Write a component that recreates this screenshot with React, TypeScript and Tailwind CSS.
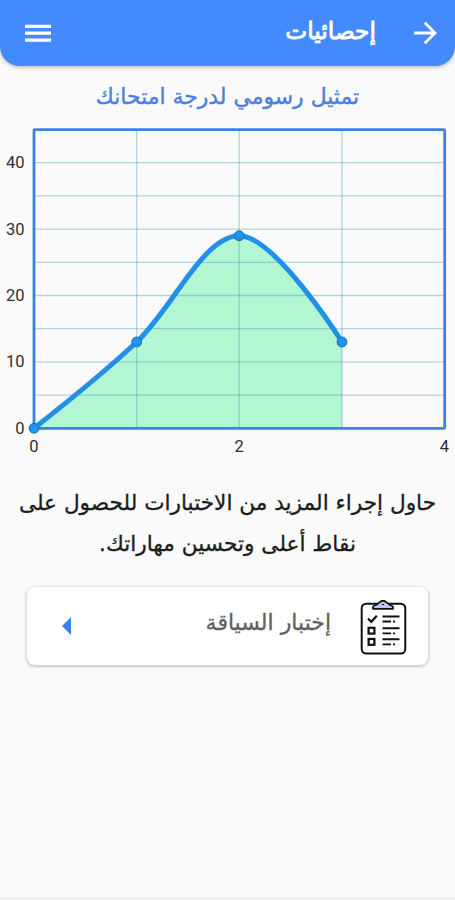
import React from "react";

const X = [34, 136.7, 239.2, 342, 444.5];
const Y0 = 428.3;
const STEP = 33.2;
const TOP = 110;
const yAt = (value: number) => Y0 - (value * STEP) / 5;

const points = [
  { x: X[0], y: yAt(0) },
  { x: X[1], y: yAt(13) },
  { x: X[2], y: yAt(29) },
  { x: X[3], y: yAt(13) },
];

const curve = `M${X[0]} ${yAt(0)} C${X[0]} ${yAt(0)} 100.8 375.6 ${X[1]} ${yAt(13)} S203.3 ${yAt(29)} ${X[2]} ${yAt(29)} S${X[3]} ${yAt(13)} ${X[3]} ${yAt(13)}`;

function Chart() {
  return (
    <svg className="block h-[350px] w-[455px] shrink-0" viewBox={`0 ${TOP} 455 350`} direction="ltr">
      <path d={`${curve} V${Y0} H${X[0]} Z`} fill="#b2f6d2" />
      {[5, 10, 15, 20, 25, 30, 35, 40].map((v) => (
        <path key={v} d={`M34 ${yAt(v)} H444`} stroke="#4d9fc4" strokeOpacity="0.42" strokeWidth="1.3" />
      ))}
      {[1, 2, 3].map((i) => (
        <path key={i} d={`M${X[i]} 130 V428`} stroke="#4d9fc4" strokeOpacity="0.42" strokeWidth="1.3" />
      ))}
      <rect x="34" y="129.7" width="410.7" height="298.6" rx="1" fill="none" stroke="#3d80e6" strokeWidth="2.8" />
      <path d={curve} fill="none" stroke="#2190e6" strokeWidth="5" />
      {points.map((p) => (
        <circle key={p.x} cx={p.x} cy={p.y} r="4.9" fill="#2094ee" stroke="#176dac" strokeWidth="1" />
      ))}
      <g fontFamily="Roboto, sans-serif" fontSize="16.5" fill="#303030">
        {[0, 10, 20, 30, 40].map((v) => (
          <text key={v} x="24.5" y={yAt(v) + 5.5} textAnchor="end">{v}</text>
        ))}
        {[0, 2, 4].map((v) => (
          <text key={v} x={X[v]} y="452.3" textAnchor="middle">{v}</text>
        ))}
      </g>
    </svg>
  );
}

function ClipboardIcon() {
  return (
    <svg className="mt-[3px] h-[56px] w-[48px] shrink-0" viewBox="0 0 48 56" fill="none" stroke="#111">
      <rect x="1.7" y="3.7" width="43.6" height="49.8" rx="4.5" strokeWidth="2" />
      <path d="M13 8.8 V7.2 Q13 6 16 5 L20.5 1.6 Q23 0 25.5 1.6 L30 5 Q33 6 33 7.2 V8.8 Z" fill="#b9c5f2" strokeWidth="1.8" strokeLinejoin="round" />
      <path d="M22 4.5 h2" strokeWidth="1.2" />
      <path d="M8 18.5 l3.3 3.3 l5.5 -6" strokeWidth="2.2" />
      <rect x="8.6" y="27.8" width="5.8" height="5.8" strokeWidth="2.2" />
      <rect x="8.6" y="39" width="5.8" height="5.8" strokeWidth="2.2" />
      <path d="M22.5 16.5 h17 M22.5 28.3 h17 M22.5 39.3 h17" strokeWidth="1.9" />
      <path d="M22.5 21.5 h8.5 M33 21.5 h2 M22.5 33.3 h8.5 M33 33.3 h2 M22.5 44.3 h8.5 M33 44.3 h2" strokeWidth="1.8" />
    </svg>
  );
}

export default function App() {
  return (
    <div dir="rtl" className="flex h-[900px] w-[455px] flex-col overflow-hidden border-b-[3px] border-[#f2f2f2] bg-[#fafafa] font-['DejaVu_Sans',sans-serif]">
      <header className="flex h-[66px] shrink-0 items-center rounded-b-[20px] bg-[#448aff] pr-[18px] pl-[24px] text-white shadow-[0_1px_4px_rgba(0,0,0,0.3)]">
        <svg className="h-6 w-6 shrink-0" viewBox="0 0 24 24" fill="none" stroke="currentColor" strokeWidth="2.8">
          <path d="M1 12 H22 M11.8 1.8 L22 12 L11.8 22.2" />
        </svg>
        <h1 className="mr-[37px] pb-[3px] text-[23.3px] font-normal whitespace-nowrap [-webkit-text-stroke:0.9px_white]">إحصائيات</h1>
        <svg className="mr-auto h-[20px] w-[28px]" viewBox="0 0 28 20" stroke="currentColor" strokeWidth="3.2">
          <path d="M1 3.3 H27 M1 10.2 H27 M1 17.1 H27" />
        </svg>
      </header>
      <h2 className="flex h-[44px] shrink-0 items-center justify-center pt-[19px] text-[21.9px] whitespace-nowrap text-[#4981dc] [-webkit-text-stroke:0.4px_#4981dc]">
        تمثيل رسومي لدرجة امتحانك
      </h2>
      <Chart />
      <div className="flex shrink-0 flex-col items-center pt-[22px] text-[21.65px] leading-[41px] whitespace-nowrap text-[#1c1c1c] [-webkit-text-stroke:0.3px_#1c1c1c]">
        <p>حاول إجراء المزيد من الاختبارات للحصول على</p>
        <p>نقاط أعلى وتحسين مهاراتك.</p>
      </div>
      <button className="mx-[27px] mt-[23px] flex h-[78px] shrink-0 items-center rounded-[8px] bg-white pr-[20px] pl-[35px] shadow-[0_1px_3px_1px_rgba(0,0,0,0.2)]">
        <ClipboardIcon />
        <span className="mr-[29px] pb-[8px] text-[22px] whitespace-nowrap text-[#606060] [-webkit-text-stroke:0.3px_#606060]">إختبار السياقة</span>
        <svg className="mr-auto h-[18px] w-[9px]" viewBox="0 0 9 18">
          <path d="M9 0 V18 L0 9 Z" fill="#3982f4" />
        </svg>
      </button>
    </div>
  );
}
